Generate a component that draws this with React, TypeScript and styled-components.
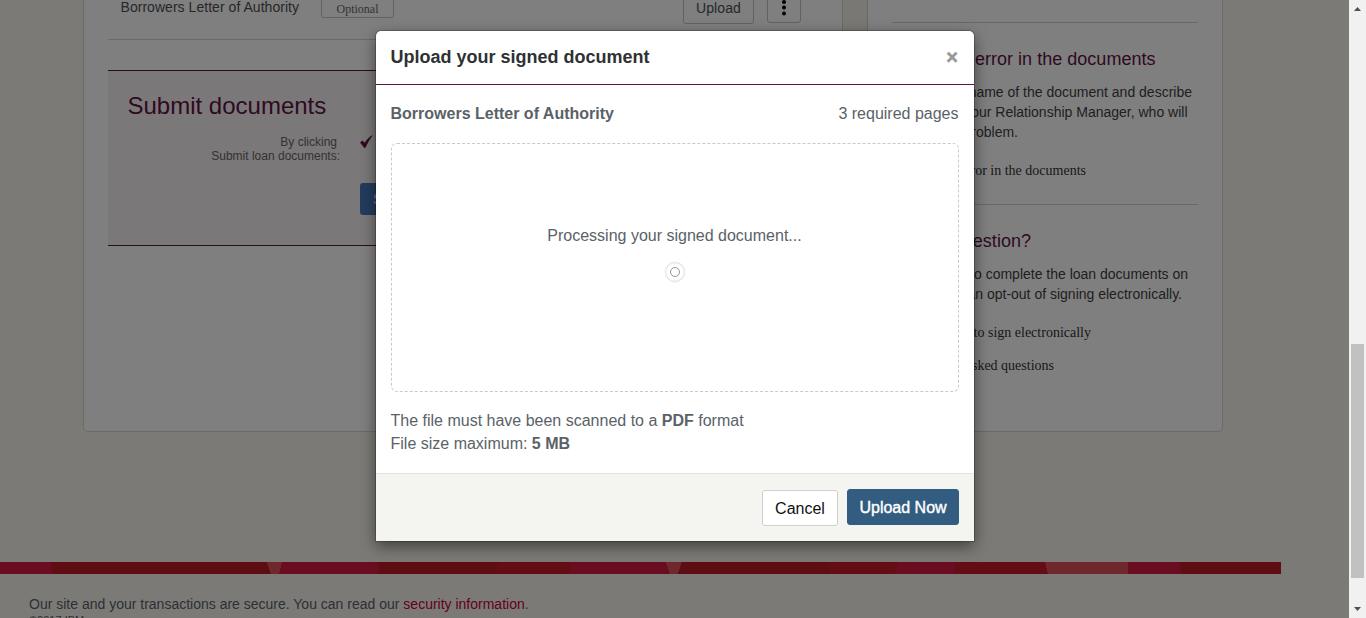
import React from "react";
import styled, { createGlobalStyle } from "styled-components";

const sans = `"Liberation Sans", Arial, sans-serif`;
const serif = `"Liberation Serif", "Times New Roman", serif`;

const Global = createGlobalStyle`
  *, *::before, *::after { box-sizing: border-box; }
  html, body { margin: 0; padding: 0; overflow: hidden; }
  body { font-family: ${sans}; }
  h1, h2, h3, p { margin: 0; font-weight: normal; }
`;

const Window = styled.div`
  position: relative;
  display: flex;
  width: 1366px;
  height: 618px;
  overflow: hidden;
`;

const Page = styled.main`
  position: relative;
  width: 1349px;
  height: 618px;
  overflow: hidden;
  background: #f8f5ef;
`;

const Columns = styled.div`
  display: flex;
  height: 432px;
  margin: 0 126px 0 83px;
  border: 1px solid #d6d2cc;
  border-top: 0;
  border-radius: 0 0 5px 5px;
  background: #fff;
`;

const MainPanel = styled.section`
  width: 758px;
  padding: 0 24px;
`;

const Gutter = styled.div`
  width: 26px;
  border: solid #d6d2cc;
  border-width: 0 1px;
  background: #f4f0ea;
`;

const DocumentRow = styled.div`
  display: flex;
  align-items: flex-start;
  height: 40px;
  padding: 0 17px 0 12px;
  border-bottom: 1px solid #d4d4d4;
`;

const DocumentName = styled.span`
  width: 201px;
  margin-top: -3px;
  padding-left: 0.5px;
  font-size: 14px;
  line-height: 20px;
  letter-spacing: 0.04px;
  color: #4a5054;
  white-space: nowrap;
`;

const OptionalTag = styled.span`
  width: 73px;
  height: 24px;
  margin: -6px auto 0 0;
  border: 1px solid #c4c4c4;
  border-radius: 2px;
  font: 12px/28px ${serif};
  text-align: center;
  color: #666;
`;

const SmallButton = styled.button<{ $width: number; $height: number }>`
  display: flex;
  align-items: center;
  justify-content: center;
  width: ${(p) => p.$width}px;
  height: ${(p) => p.$height}px;
  margin: -8px 0 0 13px;
  padding: 0;
  border: 1px solid #c4c4c4;
  border-radius: 3px;
  background: #fff;
  font: 14px/20px ${sans};
  letter-spacing: 0.1px;
  color: #4a5054;
`;

const SubmitBox = styled.section`
  height: 176px;
  margin-top: 30px;
  padding: 21px 20px 0;
  border: solid #601346;
  border-width: 1px 0;
  background: #f7f1f3;
`;

const SubmitTitle = styled.h2`
  margin-left: -0.5px;
  font-size: 24px;
  line-height: 28px;
  color: #601346;
`;

const SubmitGrid = styled.div`
  display: grid;
  grid-template-columns: 212px 1fr;
  column-gap: 20px;
  padding-top: 15px;
`;

const SubmitLabel = styled.p`
  font-size: 12px;
  line-height: 14px;
  text-align: right;
  color: #666;
`;

const LabelLine = styled.span<{ $inset?: number }>`
  display: block;
  padding-right: ${(p) => p.$inset ?? 0}px;
`;

const CheckMark = styled.svg`
  display: block;
`;

const SubmitButton = styled.button`
  width: 190px;
  height: 32px;
  margin-top: 34px;
  padding: 0 13px;
  border: 0;
  border-radius: 3px;
  background: #4479bd;
  font: 14px/32px ${sans};
  text-align: left;
  color: #fff;
`;

const HelpPanel = styled.aside`
  flex: 1;
  padding: 22px 24px 0;
`;

const HelpSection = styled.section<{ $height: number }>`
  height: ${(p) => p.$height}px;
  padding-top: 24px;
  border-top: 1px solid #d0d0d0;
`;

const HelpTitle = styled.h3<{ $end: number }>`
  width: ${(p) => p.$end}px;
  font-size: 18px;
  line-height: 24px;
  letter-spacing: 0.02px;
  text-align: right;
  color: #601346;
`;

const HelpText = styled.p`
  margin: 11px 0 19px;
  font-size: 14px;
  line-height: 20px;
  color: #3f3f3f;
`;

const HelpLine = styled.span<{ $end: number }>`
  display: block;
  width: ${(p) => p.$end}px;
  text-align: right;
  white-space: nowrap;
`;

const HelpLink = styled.a<{ $end: number }>`
  display: block;
  width: ${(p) => p.$end}px;
  margin-bottom: 13px;
  font: 14px/20px ${serif};
  text-align: right;
  color: #333;
`;

const Ribbon = styled.svg`
  display: block;
  width: 1281px;
  height: 12px;
  margin-top: 130px;
`;

const Footer = styled.footer`
  padding: 20px 29px 0;
  font-size: 14px;
  line-height: 20px;
  color: #5b6166;
`;

const FooterLink = styled.a`
  color: #c4003c;
`;

const Copyright = styled.p`
  font-size: 11px;
  line-height: 13px;
`;

const Overlay = styled.div`
  position: absolute;
  inset: 0;
  display: flex;
  align-items: flex-start;
  justify-content: center;
  padding-top: 31px;
  background: rgba(0, 0, 0, 0.5);
`;

const Dialog = styled.div`
  display: flex;
  flex-direction: column;
  width: 598px;
  height: 510px;
  margin-left: 1px;
  border-radius: 5px 5px 0 0;
  background: #fff;
  box-shadow: 0 5px 15px rgba(0, 0, 0, 0.5), 0 0 0 1px rgba(0, 0, 0, 0.2);
  overflow: hidden;
`;

const DialogHeader = styled.header`
  display: flex;
  align-items: center;
  justify-content: space-between;
  height: 54px;
  padding: 0 16px 1px 14.5px;
  border-bottom: 1px solid #601346;
`;

const DialogTitle = styled.h1`
  font-size: 18px;
  font-weight: bold;
  line-height: 24px;
  color: #2f3133;
`;

const CloseButton = styled.button`
  width: 12px;
  height: 20px;
  padding: 0;
  border: 0;
  background: none;
  font: bold 20px/20px ${sans};
  color: #989898;
  -webkit-text-stroke: 0.5px #989898;
`;

const DialogBody = styled.div`
  flex: 1;
  padding: 17px 15px 0;
  font-size: 16px;
  line-height: 23px;
  color: #5a6268;
`;

const BodyHeading = styled.div`
  display: flex;
  justify-content: space-between;
  height: 41px;
  margin: 0 0.5px 0 -0.5px;
`;

const DropArea = styled.div`
  display: flex;
  flex-direction: column;
  align-items: center;
  height: 249px;
  margin-bottom: 17px;
  padding-top: 80px;
  border: 1px dashed #c9c9c9;
  border-radius: 6px;
`;

const ProgressText = styled.span`
  margin-right: 1px;
`;

const FileRule = styled.p`
  margin-left: -0.5px;
`;

const Spinner = styled.svg`
  margin-top: 14px;
`;

const DialogFooter = styled.footer`
  display: flex;
  justify-content: flex-end;
  align-items: flex-start;
  gap: 9px;
  height: 68px;
  padding: 15px 15px 0;
  border-top: 1px solid #e4e4e2;
  background: #f4f5f0;
`;

const DialogButton = styled.button<{ $primary?: boolean }>`
  width: ${(p) => (p.$primary ? 112 : 76)}px;
  height: 36px;
  margin-top: ${(p) => (p.$primary ? 0 : 1)}px;
  padding: 2px 0 0;
  border: 1px solid ${(p) => (p.$primary ? "#325c80" : "#d4d0ca")};
  border-radius: 3px;
  background: ${(p) => (p.$primary ? "#325c80" : "#fff")};
  font: 16px/32px ${sans};
  color: ${(p) => (p.$primary ? "#fff" : "#111")};
  -webkit-text-stroke: ${(p) => (p.$primary ? "0.4px #fff" : "0")};
`;

const Scrollbar = styled.div`
  display: flex;
  flex-direction: column;
  align-items: center;
  width: 17px;
  height: 618px;
  background: #f1f1f1;
`;

const ScrollTrack = styled.div`
  flex: 1;
  width: 13px;
  padding-top: 327px;
`;

const ScrollThumb = styled.div`
  height: 234px;
  background: #c1c1c1;
`;

const ribbonParts: [string, string][] = [
  ["0,0 51,0 53,12 0,12", "#d61a40"],
  ["51,0 267,0 271,12 53,12", "#bc1a24"],
  ["267,0 282,0 279,12 271,12", "#de5258"],
  ["282,0 378,0 378,12 279,12", "#d61a40"],
  ["378,0 498,0 496,12 378,12", "#bc1a24"],
  ["498,0 571,0 571,12 496,12", "#c81a2a"],
  ["571,0 666,0 670,12 571,12", "#d61a40"],
  ["666,0 682,0 678,12 670,12", "#de5258"],
  ["682,0 828,0 831,12 678,12", "#bc1a24"],
  ["828,0 898,0 895,12 831,12", "#c81a2a"],
  ["898,0 955,0 955,12 895,12", "#d61a40"],
  ["955,0 1045,0 1048,12 955,12", "#c81a2a"],
  ["1045,0 1128,0 1128,12 1048,12", "#de5258"],
  ["1128,0 1179,0 1182,12 1128,12", "#d61a40"],
  ["1179,0 1281,0 1281,12 1182,12", "#bc1a24"],
];

export default function App() {
  return (
    <Window>
      <Global />
      <Page>
        <Columns>
          <MainPanel>
            <DocumentRow>
              <DocumentName>Borrowers Letter of Authority</DocumentName>
              <OptionalTag>Optional</OptionalTag>
              <SmallButton $width={71} $height={32}>Upload</SmallButton>
              <SmallButton $width={34} $height={31} aria-label="More actions">
                <svg width="6" height="20" viewBox="0 0 6 20">
                  <circle cx="3" cy="4" r="2" />
                  <circle cx="3" cy="9.5" r="2" />
                  <circle cx="3" cy="15.5" r="2" />
                </svg>
              </SmallButton>
            </DocumentRow>
            <SubmitBox>
              <SubmitTitle>Submit documents</SubmitTitle>
              <SubmitGrid>
                <SubmitLabel>
                  <LabelLine $inset={3}>By clicking</LabelLine>
                  <LabelLine>Submit loan documents:</LabelLine>
                </SubmitLabel>
                <div>
                  <CheckMark width="14" height="14" viewBox="0 0 14 14">
                    <path d="M0 7.6 L2.6 5.6 L4.7 7.8 C6.8 4.4 9.6 1.4 13 0 C10 3.8 7.6 8 5.6 12.6 L4.4 13 Z" fill="#601346" />
                  </CheckMark>
                  <SubmitButton>Submit loan documents</SubmitButton>
                </div>
              </SubmitGrid>
            </SubmitBox>
          </MainPanel>
          <Gutter />
          <HelpPanel>
            <HelpSection $height={182}>
              <HelpTitle $end={263.5}>error in the documents</HelpTitle>
              <HelpText>
                <HelpLine $end={300}>name of the document and describe</HelpLine>
                <HelpLine $end={295.5}>your Relationship Manager, who will</HelpLine>
                <HelpLine $end={126}>problem.</HelpLine>
              </HelpText>
              <HelpLink $end={194}>error in the documents</HelpLink>
            </HelpSection>
            <HelpSection $height={200}>
              <HelpTitle $end={139}>question?</HelpTitle>
              <HelpText>
                <HelpLine $end={296}>to complete the loan documents on</HelpLine>
                <HelpLine $end={290}>can opt-out of signing electronically.</HelpLine>
              </HelpText>
              <HelpLink $end={199}>to sign electronically</HelpLink>
              <HelpLink $end={162}>asked questions</HelpLink>
            </HelpSection>
          </HelpPanel>
        </Columns>
        <Ribbon viewBox="0 0 1281 12" shapeRendering="crispEdges">
          {ribbonParts.map(([points, fill]) => (
            <polygon key={points} points={points} fill={fill} />
          ))}
        </Ribbon>
        <Footer>
          <p>
            Our site and your transactions are secure. You can read our <FooterLink>security information</FooterLink>.
          </p>
          <Copyright>©2017 IBM</Copyright>
        </Footer>
        <Overlay>
          <Dialog role="dialog">
            <DialogHeader>
              <DialogTitle>Upload your signed document</DialogTitle>
              <CloseButton aria-label="Close">×</CloseButton>
            </DialogHeader>
            <DialogBody>
              <BodyHeading>
                <strong>Borrowers Letter of Authority</strong>
                <span>3 required pages</span>
              </BodyHeading>
              <DropArea>
                <ProgressText>Processing your signed document...</ProgressText>
                <Spinner width="22" height="22" viewBox="0 0 22 22" fill="none">
                  <circle cx="11" cy="11" r="9.5" stroke="#ebebeb" strokeWidth="1.8" />
                  <circle cx="11" cy="11" r="4.5" stroke="#8a8a8a" strokeWidth="0.9" />
                </Spinner>
              </DropArea>
              <FileRule>The file must have been scanned to a <strong>PDF</strong> format</FileRule>
              <FileRule>File size maximum: <strong>5 MB</strong></FileRule>
            </DialogBody>
            <DialogFooter>
              <DialogButton>Cancel</DialogButton>
              <DialogButton $primary>Upload Now</DialogButton>
            </DialogFooter>
          </Dialog>
        </Overlay>
      </Page>
      <Scrollbar>
        <svg width="17" height="17" viewBox="0 0 17 17"><path d="M5 11 L8.5 7 L12 11 Z" fill="#505050" /></svg>
        <ScrollTrack><ScrollThumb /></ScrollTrack>
        <svg width="17" height="17" viewBox="0 0 17 17"><path d="M5 6 L8.5 10 L12 6 Z" fill="#505050" /></svg>
      </Scrollbar>
    </Window>
  );
}
